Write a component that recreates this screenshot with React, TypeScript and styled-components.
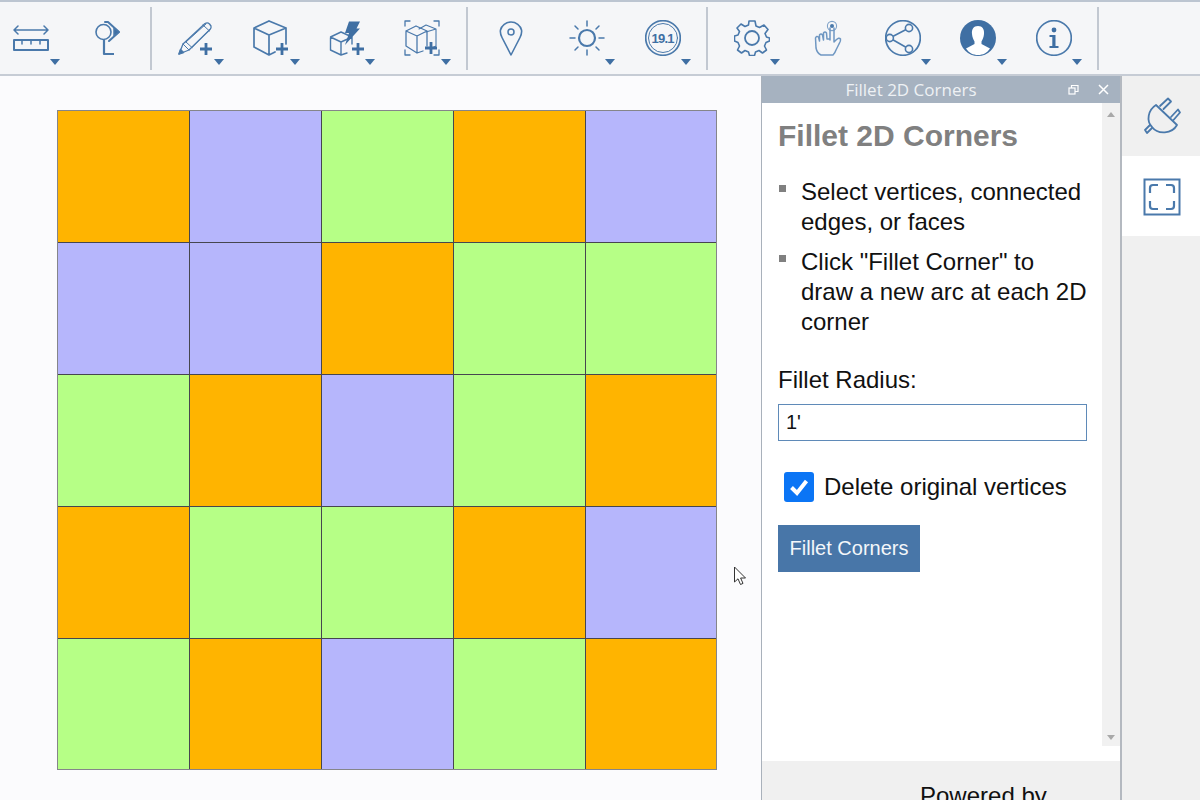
import React from "react";
import styled, { createGlobalStyle } from "styled-components";

const Global = createGlobalStyle`
  html, body { margin: 0; padding: 0; height: 800px; overflow: hidden; background: #fff; }
  body { font-family: "Liberation Sans", Arial, sans-serif; }
  * { box-sizing: border-box; }
`;

const BLUE = "#4a79ab";

const Page = styled.div`
  width: 1200px;
  height: 800px;
  display: flex;
  flex-direction: column;
  overflow: hidden;
  position: relative;
`;

const Toolbar = styled.div`
  height: 76px;
  flex: none;
  display: flex;
  align-items: center;
  padding-left: 13px;
  background: #f5f6f8;
  border-top: 2px solid #bcc5d1;
  border-bottom: 2px solid #c6ccd5;
`;

const Group = styled.div`
  display: flex;
  gap: 39.6px;
`;

const Separator = styled.div`
  width: 2px;
  height: 63px;
  margin: 0 25.5px 0 25.5px;
  background: #c2c8d1;
`;

const ToolButton = styled.div`
  position: relative;
  width: 36px;
  height: 36px;
  svg { display: block; }
`;

const Caret = styled.span`
  position: absolute;
  left: 36.5px;
  top: 39px;
  width: 0;
  height: 0;
  border-left: 5.5px solid transparent;
  border-right: 5.5px solid transparent;
  border-top: 6px solid #3f6fa3;
`;

const Main = styled.div`
  flex: 1;
  display: flex;
  min-height: 0;
`;

const Canvas = styled.div`
  width: 761px;
  flex: none;
  padding: 34px 0 0 57px;
  background: #fbfbfd;
  position: relative;
`;

const Board = styled.div`
  display: grid;
  grid-template-columns: repeat(4, 131px) 130px;
  grid-template-rows: repeat(4, 131px) 130px;
  gap: 1px;
  width: 660px;
  background: #46464f;
  border: 1px solid #85858a;
`;

const COLORS: Record<string, string> = { O: "#ffb400", P: "#b6b6fc", G: "#b6ff86" };

const Cell = styled.div<{ $c: string }>`
  background: ${(p) => COLORS[p.$c]};
`;

const Cursor = styled.svg`
  position: absolute;
  left: 733px;
  top: 490px;
`;

const Panel = styled.div`
  width: 359px;
  flex: none;
  display: flex;
  flex-direction: column;
  background: #fff;
  border-left: 1px solid #a9b1bb;
`;

const TitleBar = styled.div`
  height: 27px;
  flex: none;
  position: relative;
  display: flex;
  align-items: center;
  justify-content: center;
  padding-right: 60px;
  background: #a6b2c0;
  color: #eef1f4;
  font: 17px "Open Sans", sans-serif;
`;

const WindowControls = styled.div`
  position: absolute;
  right: 11px;
  top: 8px;
  display: flex;
  gap: 19px;
  svg { display: block; }
`;

const PanelBody = styled.div`
  height: 658px;
  flex: none;
  display: flex;
  background: #fff;
`;

const Content = styled.div`
  flex: 1;
  padding: 16px 13px 0 16px;
`;

const Heading = styled.h1`
  margin: 0 0 25px;
  font-size: 30px;
  line-height: 33px;
  font-weight: 700;
  color: #808080;
`;

const Steps = styled.ul`
  list-style: none;
  margin: 0 0 28px;
  padding: 0;
`;

const Step = styled.li`
  position: relative;
  padding-left: 23px;
  margin-bottom: 10px;
  font-size: 24px;
  line-height: 30px;
  color: #111;
  &::before {
    content: "";
    position: absolute;
    left: 1px;
    top: 8px;
    width: 7px;
    height: 7px;
    background: #808080;
  }
`;

const FieldLabel = styled.div`
  font-size: 24px;
  line-height: 30px;
  color: #111;
  margin-bottom: 9px;
`;

const TextField = styled.div`
  width: 309px;
  height: 37px;
  padding-left: 7px;
  display: flex;
  align-items: center;
  border: 1px solid #5f8ab8;
  font-size: 20px;
  color: #111;
`;

const CheckRow = styled.div`
  display: flex;
  align-items: center;
  gap: 10px;
  margin: 31px 0 23px 6px;
  font-size: 24px;
  line-height: 30px;
  color: #111;
`;

const CheckBox = styled.span`
  width: 30px;
  height: 30px;
  display: flex;
  align-items: center;
  justify-content: center;
  border-radius: 3px;
  background: #0b75f5;
`;

const ActionButton = styled.div`
  width: 142px;
  height: 47px;
  display: flex;
  align-items: center;
  justify-content: center;
  background: #4876a8;
  color: #f4f7fa;
  font-size: 20px;
`;

const ScrollTrack = styled.div`
  width: 18px;
  flex: none;
  height: 643px;
  display: flex;
  flex-direction: column;
  justify-content: space-between;
  align-items: center;
  padding: 9px 0 6px;
  background: #f1f1f1;
`;

const ScrollArrow = styled.span<{ $up?: boolean }>`
  width: 0;
  height: 0;
  border-left: 4.5px solid transparent;
  border-right: 4.5px solid transparent;
  ${(p) => (p.$up ? "border-bottom: 5px solid #a9a9a9;" : "border-top: 5px solid #a9a9a9;")}
`;

const PanelFooter = styled.div`
  flex: 1;
  background: #f0f0f0;
  padding: 20px 0 0 158px;
  font-size: 24px;
  line-height: 30px;
  color: #111;
`;

const Rail = styled.div`
  flex: 1;
  background: #f0f0f0;
  border-left: 2px solid #b4b9c0;
`;

const RailButton = styled.div<{ $active?: boolean }>`
  height: 80px;
  display: flex;
  align-items: center;
  justify-content: center;
  padding: ${(p) => (p.$active ? "2px 0 0 2px" : "0")};
  background: ${(p) => (p.$active ? "#fff" : "transparent")};
  svg { display: block; overflow: visible; }
`;

const Icon = ({ children }: { children: React.ReactNode }) => (
  <svg width="36" height="36" viewBox="0 0 36 36" fill="none" stroke={BLUE} strokeWidth="1.5" strokeLinejoin="round" strokeLinecap="round">
    {children}
  </svg>
);

const Plus = ({ x, y }: { x: number; y: number }) => (
  <path d={`M${x - 6} ${y}H${x + 6}M${x} ${y - 6}V${y + 6}`} stroke="#3f6fa3" strokeWidth="2.8" strokeLinecap="butt" />
);

const Ruler = () => (
  <Icon>
    <path d="M1 10H35M5 6L1 10L5 14M31 6L35 10L31 14" />
    <rect x="1" y="20" width="34" height="10" strokeWidth="2" />
    <path d="M9 20V24M18 20V24M27 20V24" />
  </Icon>
);

const Protractor = () => (
  <Icon>
    <circle cx="14.5" cy="12" r="7.5" strokeWidth="1.6" />
    <path d="M16 2L19 2L30 12L20 21" strokeWidth="2" />
    <path d="M25 8L30 12L25 16Z" fill="#3f6fa3" />
    <path d="M15 20V34H25" strokeWidth="2.2" strokeLinecap="butt" />
  </Icon>
);

const Pencil = () => (
  <Icon>
    <path d="M1 34L5 24L27 3.5Q29.5 2 31.5 4L33 6Q33.5 8 32 9.5L11 30Z" strokeWidth="1.3" />
    <path d="M5 24L11 30M8 22L14 27.5M25 5L31.5 11M8 22L28 4M14 27.5L32 9" strokeWidth="1" />
    <path d="M1 34L2.5 29.5L5.5 32.5Z" fill="#3f6fa3" />
    <Plus x={28} y={29} />
  </Icon>
);

const Cube = () => (
  <Icon>
    <path d="M16 1L33 8V24M33 8L16 15L1 8L16 1M1 8V27L16 35L22 32M16 15V35" strokeWidth="1.7" />
    <Plus x={29} y={29} />
  </Icon>
);

const BoltCube = () => (
  <Icon>
    <path d="M12 12L23 17V24M23 17L12 22L1.5 17L12 12M1.5 17V30L12 35L18 33M12 22V35" strokeWidth="1.4" />
    <path d="M20 1.5H31L27.5 8.5H31L16 25L20 13H16Z" fill="#3f6fa3" stroke="none" />
    <Plus x={29} y={29} />
  </Icon>
);

const GroupCube = () => (
  <Icon>
    <path d="M1 6V1H6M30 1H35V6M1 30V35H6M30 35H35V30" strokeWidth="1.3" />
    <path d="M15 9L22 5L32 9V26L26 29M22 12L32 9" strokeWidth="1.1" />
    <path d="M12 6L23 11V26M23 11L13 16L2 11L12 6M2 11V26L13 33L19 31M13 16V33" strokeWidth="1.3" />
    <Plus x={27} y={28} />
  </Icon>
);

const Pin = () => (
  <Icon>
    <path d="M18 35L9 17.5C7.5 14.5 7 12.5 7.5 10C8.5 5.5 13 2 18 2C23 2 27.5 5.5 28.5 10C29 12.5 28.5 14.5 27 17.5Z" strokeWidth="1.6" />
    <circle cx="18" cy="12" r="3" />
  </Icon>
);

const Sun = () => (
  <Icon>
    <circle cx="18" cy="18" r="8" strokeWidth="2.2" />
    <path d="M18 1V6M18 30V35M1 18H6M30 18H35M6 6L9 9M27 27L30 30M6 30L9 27M27 9L30 6" />
  </Icon>
);

const VersionText = styled.text`
  font: 700 13px "Liberation Sans", sans-serif;
  letter-spacing: -0.8px;
`;

const Version = () => (
  <Icon>
    <circle cx="18" cy="18" r="17.3" strokeWidth="1.7" />
    <circle cx="18" cy="18" r="14.5" strokeWidth="1" />
    <VersionText x="17.6" y="22.5" textAnchor="middle" fill="#3f6fa3" stroke="none">19.1</VersionText>
  </Icon>
);

const Gear = () => (
  <Icon>
    <path
      d="M15 1H21L22 6L25.5 7.5L30 5L34 9.5L31 13.5L32.5 17L35.5 18V21L32 22.5L30.5 26L32.5 30L28.5 33L25 30.5L21.5 32L20.5 35.5H15.5L14.5 32L11 30.5L7.5 33L3.5 30L5.5 26L4 22.5L0.5 21V16L4 15L5.5 11.5L3 8L7 4L11 6.5L14.5 5Z"
      strokeWidth="1.6"
    />
    <circle cx="18" cy="18" r="7" strokeWidth="1.8" />
  </Icon>
);

const Hand = () => (
  <Icon>
    <circle cx="23" cy="6" r="4.6" strokeWidth="1.1" stroke="#7fa2c8" />
    <circle cx="23" cy="6" r="2" fill={BLUE} stroke="none" />
    <path
      d="M21 8V20M25 8V22L27 20Q30 17 31.5 19Q32 21 30 24L27 30Q26 33 24 35H12Q8 33 7 28L6.5 18Q7.5 15.5 9.5 17L10.5 21V15Q12 13 13.5 15L14.5 20V13Q16 11 17.5 13L18 19H21"
      strokeWidth="1.5"
      stroke="#6f97c2"
    />
  </Icon>
);

const Share = () => (
  <Icon>
    <circle cx="18" cy="18" r="17.3" strokeWidth="1.7" />
    <path d="M24 8L4.8 18L24 29" strokeWidth="1.6" />
    <circle cx="24" cy="8" r="3.6" fill="#f5f6f8" strokeWidth="1.6" />
    <circle cx="4.8" cy="18" r="3.6" fill="#f5f6f8" strokeWidth="1.6" />
    <circle cx="24" cy="29" r="3.6" fill="#f5f6f8" strokeWidth="1.6" />
  </Icon>
);

const User = () => (
  <Icon>
    <circle cx="18" cy="18" r="18" fill="#3f6fa3" stroke="none" />
    <path
      d="M18 6C13.5 6 11.5 9.5 12 14C12.2 17 13.5 20 14.5 21.5V24L6 28.5C9 33 13 35 18 35C23 35 27 33 30 28.5L21.5 24V21.5C22.5 20 23.8 17 24 14C24.5 9.5 22.5 6 18 6Z"
      fill="#fff"
      stroke="none"
    />
  </Icon>
);

const Info = () => (
  <Icon>
    <circle cx="18" cy="18" r="17.3" strokeWidth="1.7" />
    <circle cx="18" cy="10" r="2.4" fill="#3f6fa3" stroke="none" />
    <path d="M13.5 15H19.5V26H22.5V28H13.5V26H16.3V17H13.5Z" fill="#3f6fa3" stroke="none" />
  </Icon>
);

const GROUPS: { icon: React.ComponentType; caret: boolean }[][] = [
  [{ icon: Ruler, caret: true }, { icon: Protractor, caret: false }],
  [
    { icon: Pencil, caret: true },
    { icon: Cube, caret: true },
    { icon: BoltCube, caret: true },
    { icon: GroupCube, caret: true },
  ],
  [{ icon: Pin, caret: false }, { icon: Sun, caret: true }, { icon: Version, caret: true }],
  [
    { icon: Gear, caret: true },
    { icon: Hand, caret: false },
    { icon: Share, caret: true },
    { icon: User, caret: true },
    { icon: Info, caret: true },
  ],
];

const BOARD = ["OPGOP", "PPOGG", "GOPGO", "OGGOP", "GOPGO"];

export default function App() {
  return (
    <Page>
      <Global />
      <Toolbar>
        {GROUPS.map((group, i) => (
          <React.Fragment key={i}>
            <Group>
              {group.map(({ icon: ToolIcon, caret }, j) => (
                <ToolButton key={j}>
                  <ToolIcon />
                  {caret && <Caret />}
                </ToolButton>
              ))}
            </Group>
            <Separator />
          </React.Fragment>
        ))}
      </Toolbar>
      <Main>
        <Canvas>
          <Board>
            {BOARD.join("").split("").map((c, i) => (
              <Cell key={i} $c={c} />
            ))}
          </Board>
          <Cursor width="16" height="20" viewBox="0 0 16 20">
            <path d="M1.5 1V16L5 12.8L7.5 18.5L10 17.4L7.6 12H12.5Z" fill="#fff" stroke="#333" strokeWidth="1" strokeLinejoin="round" />
          </Cursor>
        </Canvas>
        <Panel>
          <TitleBar>
            Fillet 2D Corners
            <WindowControls>
              <svg width="11" height="11" viewBox="0 0 11 11" fill="none" stroke="#fff" strokeWidth="1.2">
                <rect x="1" y="4" width="6" height="6" />
                <path d="M3.5 4V1.5H10V7.5H7" />
              </svg>
              <svg width="11" height="11" viewBox="0 0 11 11" fill="none" stroke="#fff" strokeWidth="1.5">
                <path d="M1 1L10 10M10 1L1 10" />
              </svg>
            </WindowControls>
          </TitleBar>
          <PanelBody>
            <Content>
              <Heading>Fillet 2D Corners</Heading>
              <Steps>
                <Step>Select vertices, connected edges, or faces</Step>
                <Step>Click "Fillet Corner" to draw a new arc at each 2D corner</Step>
              </Steps>
              <FieldLabel>Fillet Radius:</FieldLabel>
              <TextField>1'</TextField>
              <CheckRow>
                <CheckBox>
                  <svg width="22" height="22" viewBox="0 0 22 22" fill="none" stroke="#fff" strokeWidth="4">
                    <path d="M3.5 11.5L9 17L18.5 5" />
                  </svg>
                </CheckBox>
                Delete original vertices
              </CheckRow>
              <ActionButton>Fillet Corners</ActionButton>
            </Content>
            <ScrollTrack>
              <ScrollArrow $up />
              <ScrollArrow />
            </ScrollTrack>
          </PanelBody>
          <PanelFooter>Powered by</PanelFooter>
        </Panel>
        <Rail>
          <RailButton>
            <svg width="38" height="38" viewBox="0 0 38 38" fill="none" stroke={BLUE} strokeWidth="1.8" strokeLinejoin="round" strokeLinecap="round">
              <path d="M14 8L35 28C30 37 16 38 10 30C4 24 6 13 14 8Z" />
              <path d="M18 9L26 1.5L29 4.5L21.5 12M29 20L36 12.5L38 15.5L31.5 23M8 28L3 33L5 36L10 31" />
            </svg>
          </RailButton>
          <RailButton $active>
            <svg width="38" height="38" viewBox="0 0 38 38" fill="none" stroke={BLUE}>
              <rect x="1.5" y="1.5" width="35" height="35" strokeWidth="2" />
              <path d="M7 15V10Q7 7 10 7H15M23 7H28Q31 7 31 10V15M31 23V28Q31 31 28 31H23M15 31H10Q7 31 7 28V23" strokeWidth="2.2" />
            </svg>
          </RailButton>
        </Rail>
      </Main>
    </Page>
  );
}
